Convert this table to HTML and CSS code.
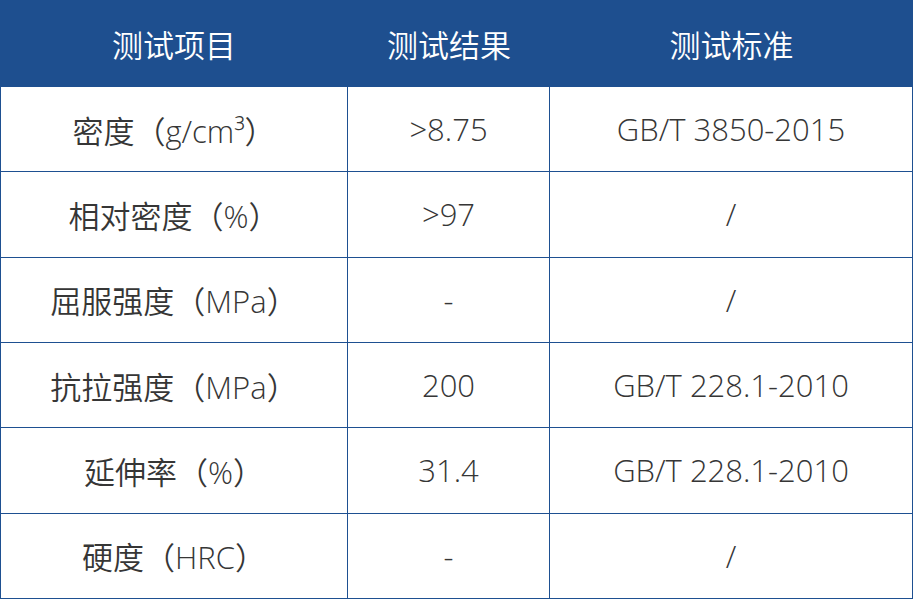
FILE: index.html
```html
<!DOCTYPE html>
<html lang="zh-CN">
<head>
<meta charset="utf-8">
<link rel="stylesheet" href="styles.css">
</head>
<body>
<div class="table">
  <div class="cell head">测试项目</div>
  <div class="cell head">测试结果</div>
  <div class="cell head">测试标准</div>

  <div class="cell first">密度（g/cm³）</div>
  <div class="cell">&gt;8.75</div>
  <div class="cell">GB/T 3850-2015</div>

  <div class="cell first">相对密度（%）</div>
  <div class="cell">&gt;97</div>
  <div class="cell">/</div>

  <div class="cell first">屈服强度（MPa）</div>
  <div class="cell">-</div>
  <div class="cell">/</div>

  <div class="cell first">抗拉强度（MPa）</div>
  <div class="cell">200</div>
  <div class="cell">GB/T 228.1-2010</div>

  <div class="cell first">延伸率（%）</div>
  <div class="cell">31.4</div>
  <div class="cell">GB/T 228.1-2010</div>

  <div class="cell first">硬度（HRC）</div>
  <div class="cell">-</div>
  <div class="cell">/</div>
</div>
</body>
</html>
```
FILE: styles.css
```css
html, body {
  margin: 0;
  padding: 0;
  background: #ffffff;
}

.table {
  display: grid;
  width: 913px;
  grid-template-columns: 348px 202px 363px;
  grid-template-rows: 87px repeat(6, 85.33px);
  font-family: "Open Sans", "Noto Sans CJK SC", sans-serif;
  font-size: 31px;
  font-weight: 350;
  color: #363636;
}

.cell {
  display: flex;
  align-items: center;
  justify-content: center;
  box-sizing: border-box;
  border-right: 1px solid #1e5091;
  border-bottom: 1px solid #1e5091;
  white-space: nowrap;
}

.cell.first {
  border-left: 1px solid #1e5091;
}

.cell.head {
  background: #1e4f8f;
  color: #ffffff;
  border: none;
}
```
